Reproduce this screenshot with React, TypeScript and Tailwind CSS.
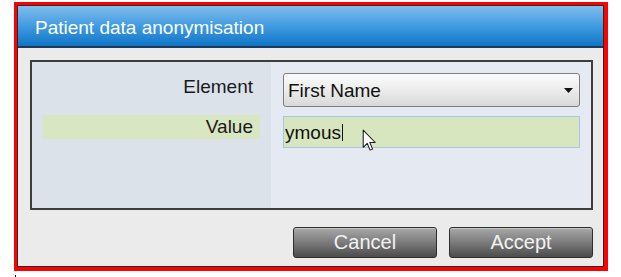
import React from "react";

function Pointer() {
  return (
    <svg width="15" height="24" viewBox="0 0 13 21" className="absolute left-[362px] top-[129px]">
      <path
        d="M1 1 L1 16 L4.5 12.5 L7 18.5 L9.2 17.6 L6.8 11.8 L11.5 11.8 Z"
        fill="#ffffff"
        stroke="#1a1a1a"
        strokeWidth="0.9"
        strokeLinejoin="round"
      />
    </svg>
  );
}

function DialogButton({ label }: { label: string }) {
  return (
    <button className="w-[144px] h-[31px] rounded-[3px] border border-[#2e2e2e] bg-gradient-to-b from-[#a9a9a9] via-[#7b7b7b] to-[#4c4c4c] text-[20px] leading-[29px] text-[#f2f2f2] shadow-[inset_0_1px_0_rgba(255,255,255,0.35)]">
      {label}
    </button>
  );
}

export default function App() {
  return (
    <div className="relative w-[621px] h-[277px] bg-white pt-[2px] font-['Liberation_Sans',Arial,sans-serif]">
      {/* Red highlight frame around the dialog */}
      <div className="ml-[14px] w-[594px] h-[269px] border-l-[3px] border-t-[3px] border-r-4 border-b-4 border-[#ff0000]">
        <div className="h-full flex flex-col border border-[#2a2a2a] bg-[#ebebeb]">
          {/* Title bar */}
          <div className="h-[42px] shrink-0 flex items-center pl-[17px] pt-[3px] border-b-2 border-[#1f3a57] bg-gradient-to-b from-[#80bdee] via-[#3f9be0] to-[#0b75c6]">
            <span className="text-[19px] leading-[22px] text-white">Patient data anonymisation</span>
          </div>

          {/* Body */}
          <div className="flex-1 flex flex-col pt-[12px] pl-[12px] pr-[10px]">
            <div className="relative w-[563px] h-[150px] flex border-2 border-[#3d3d3d]">
              {/* Labels column */}
              <div className="w-[239px] bg-[#dbe2ea] pt-[14px] flex flex-col">
                <div className="pr-[18px] text-right text-[19px] leading-[22px] text-[#1a1a1a]">Element</div>
                <div className="mt-[17px] ml-[11px] w-[217px] h-[24px] bg-[#d8e6c2] pr-[7px] text-right text-[19px] leading-[24px] text-[#1a1a1a]">
                  Value
                </div>
              </div>

              {/* Inputs column */}
              <div className="flex-1 bg-[#e5eaf2] pt-[11px] pl-[12px]">
                <div className="w-[297px] h-[34px] rounded-[3px] border border-[#7d7d7d] bg-gradient-to-b from-[#fbfbfb] via-[#ececec] to-[#d9d9d9] flex items-center justify-between pl-[4px] pr-[6px]">
                  <span className="text-[19px] leading-[22px] text-[#111] pt-[2px]">First Name</span>
                  <svg width="9" height="5" viewBox="0 0 9 5">
                    <path d="M0 0 L9 0 L4.5 5 Z" fill="#111" />
                  </svg>
                </div>
                <div className="mt-[9px] w-[297px] h-[32px] border border-[#a8c6e6] bg-[#d8e6c0] flex items-center pl-[1px]">
                  <span className="text-[19px] leading-[22px] text-[#111] pt-[2px]">ymous</span>
                  <span className="ml-[1px] w-px h-[17px] bg-[#111] mt-[1px]" />
                </div>
              </div>
            </div>

            {/* Buttons */}
            <div className="mt-[17px] flex justify-end gap-[12px] w-[563px]">
              <DialogButton label="Cancel" />
              <DialogButton label="Accept" />
            </div>
          </div>
        </div>
      </div>
      <div className="ml-[15px] mt-[4px] w-px h-[2px] bg-black" />
      <Pointer />
    </div>
  );
}
